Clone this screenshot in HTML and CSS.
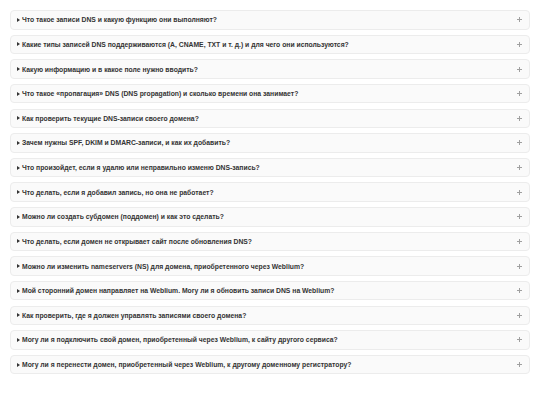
FILE: index.html
```html
<!DOCTYPE html>
<html lang="ru">
<head>
<meta charset="utf-8">
<link rel="stylesheet" href="styles.css">
</head>
<body>
<div class="faq">
  <div class="item"><span class="tri"></span><span class="q">Что такое записи DNS и какую функцию они выполняют?</span><span class="plus"></span></div>
  <div class="item"><span class="tri"></span><span class="q">Какие типы записей DNS поддерживаются (A, CNAME, TXT и т. д.) и для чего они используются?</span><span class="plus"></span></div>
  <div class="item"><span class="tri"></span><span class="q">Какую информацию и в какое поле нужно вводить?</span><span class="plus"></span></div>
  <div class="item"><span class="tri"></span><span class="q">Что такое «пропагация» DNS (DNS propagation) и сколько времени она занимает?</span><span class="plus"></span></div>
  <div class="item"><span class="tri"></span><span class="q">Как проверить текущие DNS-записи своего домена?</span><span class="plus"></span></div>
  <div class="item"><span class="tri"></span><span class="q">Зачем нужны SPF, DKIM и DMARC-записи, и как их добавить?</span><span class="plus"></span></div>
  <div class="item"><span class="tri"></span><span class="q">Что произойдет, если я удалю или неправильно изменю DNS-запись?</span><span class="plus"></span></div>
  <div class="item"><span class="tri"></span><span class="q">Что делать, если я добавил запись, но она не работает?</span><span class="plus"></span></div>
  <div class="item"><span class="tri"></span><span class="q">Можно ли создать субдомен (поддомен) и как это сделать?</span><span class="plus"></span></div>
  <div class="item"><span class="tri"></span><span class="q">Что делать, если домен не открывает сайт после обновления DNS?</span><span class="plus"></span></div>
  <div class="item"><span class="tri"></span><span class="q">Можно ли изменить nameservers (NS) для домена, приобретенного через Weblium?</span><span class="plus"></span></div>
  <div class="item"><span class="tri"></span><span class="q">Мой сторонний домен направляет на Weblium. Могу ли я обновить записи DNS на Weblium?</span><span class="plus"></span></div>
  <div class="item"><span class="tri"></span><span class="q">Как проверить, где я должен управлять записями своего домена?</span><span class="plus"></span></div>
  <div class="item"><span class="tri"></span><span class="q">Могу ли я подключить свой домен, приобретенный через Weblium, к сайту другого сервиса?</span><span class="plus"></span></div>
  <div class="item"><span class="tri"></span><span class="q">Могу ли я перенести домен, приобретенный через Weblium, к другому доменному регистратору?</span><span class="plus"></span></div>
</div>
</body>
</html>
```

FILE: styles.css
```css
html, body {
  margin: 0;
  padding: 0;
  background: #ffffff;
}
body {
  font-family: "Liberation Sans", Arial, sans-serif;
}
.faq {
  padding: 10px 10px;
  display: flex;
  flex-direction: column;
  gap: 5.04px;
}
.item {
  box-sizing: border-box;
  height: 19.6px;
  display: flex;
  align-items: center;
  padding: 0 7.5px 0 5.7px;
  background: #fafafa;
  border: 1px solid #ececec;
  border-radius: 4px;
}
.tri {
  width: 0;
  height: 0;
  border-top: 2px solid transparent;
  border-bottom: 2px solid transparent;
  border-left: 3px solid #333;
  margin-right: 2.3px;
  flex: none;
}
.q {
  flex: 1;
  font-size: 6.8px;
  font-weight: bold;
  color: #333333;
  line-height: 9px;
  white-space: nowrap;
}
.plus {
  flex: none;
  position: relative;
  width: 5px;
  height: 5px;
}
.plus::before,
.plus::after {
  content: "";
  position: absolute;
  background: #a0a0a0;
}
.plus::before {
  left: 0;
  top: 2px;
  width: 5px;
  height: 1px;
}
.plus::after {
  left: 2px;
  top: 0;
  width: 1px;
  height: 5px;
}
```
